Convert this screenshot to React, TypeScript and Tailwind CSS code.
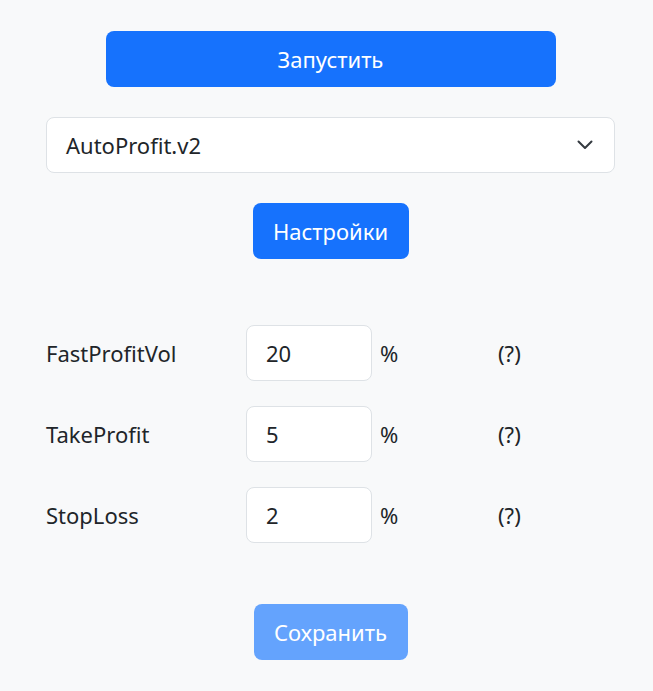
const params = [
  { name: "FastProfitVol", value: "20" },
  { name: "TakeProfit", value: "5" },
  { name: "StopLoss", value: "2" },
]

export default function App() {
  return (
    <div
      className="min-h-[691px] bg-[#f8f9fa] text-[#212529]"
      style={{ fontFamily: '"Noto Sans", "Open Sans", sans-serif' }}
    >
      <div className="ml-[46px] w-[569px] pt-[31px] flex flex-col">
        <button className="mx-auto w-[450px] h-[56px] rounded-lg bg-[#1672fd] text-white text-[22px]">
          Запустить
        </button>

        <div className="mt-[30px] h-[56px] rounded-lg border border-[#dee2e6] bg-white flex items-center justify-between pl-[19px] pr-[21px] text-[22px]">
          <span>AutoProfit.v2</span>
          <svg width="16" height="10" viewBox="0 0 16 10" fill="none">
            <path d="M1.5 1.5 L8 8 L14.5 1.5" stroke="#343a40" strokeWidth="2" strokeLinecap="round" strokeLinejoin="round" />
          </svg>
        </div>

        <button className="mx-auto mt-[30px] w-[156px] h-[56px] rounded-lg bg-[#1672fd] text-white text-[22px]">
          Настройки
        </button>

        <div className="mt-[66px] flex flex-col gap-[25px]">
          {params.map((p) => (
            <div key={p.name} className="flex items-center h-[56px] text-[22px]">
              <span className="w-[200px]">{p.name}</span>
              <div className="w-[126px] h-[56px] rounded-lg border border-[#dee2e6] bg-white flex items-center pl-[19px]">
                {p.value}
              </div>
              <span className="ml-[8px] w-[118px]">%</span>
              <span>(?)</span>
            </div>
          ))}
        </div>

        <button className="mx-auto mt-[61px] w-[154px] h-[56px] rounded-lg bg-[#64a3fd] text-white text-[22px]">
          Сохранить
        </button>
      </div>
    </div>
  )
}
